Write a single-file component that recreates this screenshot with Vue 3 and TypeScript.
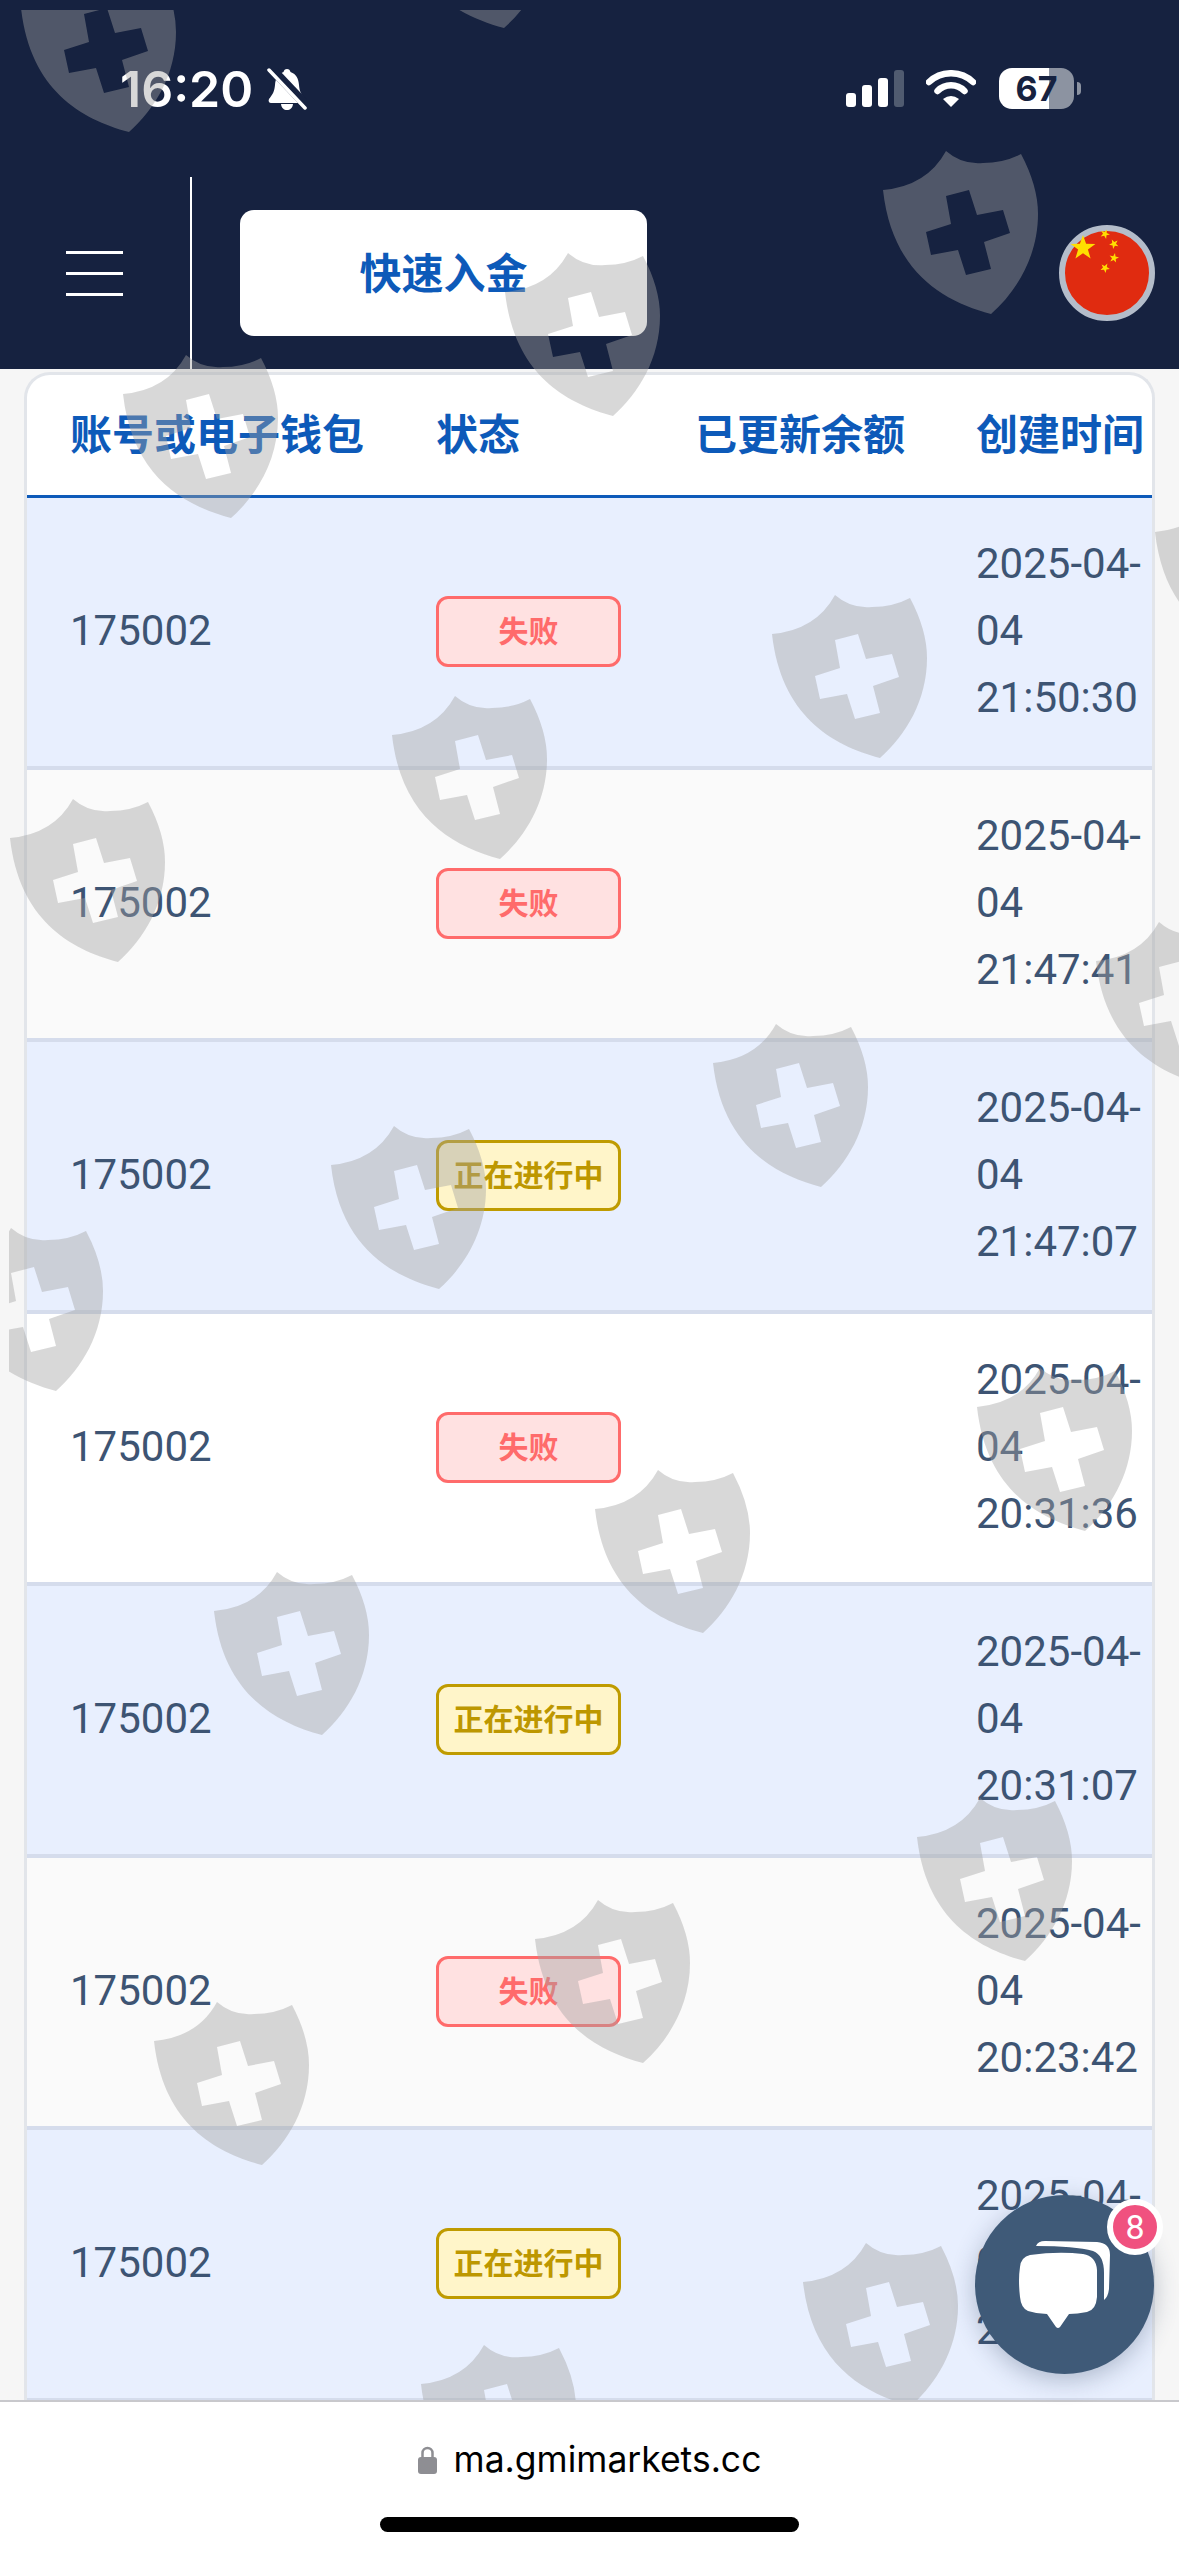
<script setup lang="ts">
type Status = "fail" | "pending";

interface Deposit {
	account: string;
	status: Status;
	created: string;
}

const statusText: Record<Status, string> = {
	fail: "失败",
	pending: "正在进行中",
};

const deposits: Deposit[] = [
	{ account: "175002", status: "fail", created: "2025-04-04 21:50:30" },
	{ account: "175002", status: "fail", created: "2025-04-04 21:47:41" },
	{ account: "175002", status: "pending", created: "2025-04-04 21:47:07" },
	{ account: "175002", status: "fail", created: "2025-04-04 20:31:36" },
	{ account: "175002", status: "pending", created: "2025-04-04 20:31:07" },
	{ account: "175002", status: "fail", created: "2025-04-04 20:23:42" },
	{ account: "175002", status: "pending", created: "2025-04-04 20:23:07" },
];

// top-left corner of each watermark shield on the page
const shields: [number, number][] = [
	[395, -135], [20, -31],
	[882, 151], [504, 253], [122, 355],
	[1154, 493], [771, 595], [391, 696], [9, 799],
	[1095, 922], [712, 1024], [330, 1126], [-53, 1228],
	[976, 1368], [594, 1470], [213, 1572],
	[916, 1798], [534, 1900], [153, 2002],
	[802, 2243], [420, 2345],
];

function star(cx: number, cy: number, r: number, turn = 0): string {
	const pts: string[] = [];
	for (let i = 0; i < 10; i++) {
		const rad = i % 2 === 0 ? r : r * 0.4;
		const a = -Math.PI / 2 + turn + (i * Math.PI) / 5;
		pts.push(`${(cx + rad * Math.cos(a)).toFixed(1)},${(cy + rad * Math.sin(a)).toFixed(1)}`);
	}
	return pts.join(" ");
}

const smallStars = [
	star(46, 9, 5, 0.4),
	star(55, 19, 5, 0.8),
	star(55, 33, 5, 0.2),
	star(46, 43, 5, 0.5),
];
</script>

<template>
	<div class="screen">
		<header class="top">
			<div class="status-bar">
				<div class="status-left">
					<span class="time">16:20</span>
					<svg class="bell" width="40" height="42" viewBox="0 0 40 42">
						<path
							fill="#fff"
							d="M20 1c2 0 3 1 3.500 3 6 2 8 7 8.500 13 .4 6 2 9 6 14 1 2 0 4-2 4H4c-2 0-3-2-2-4 4-5 5.500-8 6-14 .5-6 2.500-11 8.500-13C17 2 18 1 20 1zM14 36h12c-.5 4-3 6-6 6s-5.500-2-6-6z"
						/>
						<path d="M3 -1L41 39" stroke="#162240" stroke-width="9" />
						<path d="M2 2L38 40" stroke="#fff" stroke-width="3.500" stroke-linecap="round" />
					</svg>
				</div>
				<div class="status-right">
					<div class="signal">
						<i class="bar b1"></i>
						<i class="bar b2"></i>
						<i class="bar b3"></i>
						<i class="bar b4"></i>
					</div>
					<svg class="wifi" width="50" height="37" viewBox="0 0 50 37">
						<path d="M3 12A32 32 0 0 1 47 12" fill="none" stroke="#fff" stroke-width="6.500" stroke-linecap="round" />
						<path d="M11.500 21A19 19 0 0 1 38.500 21" fill="none" stroke="#fff" stroke-width="6.500" stroke-linecap="round" />
						<path d="M17 29Q25 23 33 29L25 37Z" fill="#fff" />
					</svg>
					<div class="battery">
						<div class="battery-body">67</div>
						<i class="battery-nub"></i>
					</div>
				</div>
			</div>
			<nav class="nav">
				<button class="menu" type="button" aria-label="menu">
					<i></i>
					<i></i>
					<i></i>
				</button>
				<span class="divider"></span>
				<button class="deposit" type="button">快速入金</button>
				<svg class="flag" width="96" height="96" viewBox="0 0 96 96">
					<circle cx="48" cy="48" r="45" fill="#e02b10" stroke="#b4bdca" stroke-width="6" />
					<polygon :points="star(24, 23, 13)" fill="#ffde00" />
					<polygon v-for="pts in smallStars" :key="pts" :points="pts" fill="#ffde00" />
				</svg>
			</nav>
		</header>

		<main class="content">
			<div class="table">
				<div class="row head">
					<div class="cell">账号或电子钱包</div>
					<div class="cell">状态</div>
					<div class="cell">已更新余额</div>
					<div class="cell">创建时间</div>
				</div>
				<div class="rows">
					<div v-for="(d, i) in deposits" :key="i" class="row item">
						<div class="cell">{{ d.account }}</div>
						<div class="cell">
							<span class="tag" :class="d.status">{{ statusText[d.status] }}</span>
						</div>
						<div class="cell"></div>
						<div class="cell">{{ d.created }}</div>
					</div>
				</div>
			</div>
		</main>

		<footer class="browser-bar">
			<div class="url">
				<svg width="19" height="28" viewBox="0 0 19 28">
					<path d="M4.500 13V7a5 5 0 0 1 10 0v6" fill="none" stroke="#8e8e93" stroke-width="2.500" />
					<rect x="0" y="11" width="19" height="17" rx="3" fill="#8e8e93" />
				</svg>
				<span>ma.gmimarkets.cc</span>
			</div>
			<div class="home-indicator"></div>
		</footer>

		<svg class="watermark" width="1170" height="2390" viewBox="9 10 1170 2390">
			<defs>
				<path
					id="shield"
					fill-rule="evenodd"
					d="M64 0Q80 14 101 12Q122 12 139 3Q156 35 156 63C156 105 135 140 109 163C60 150 10 120 1 39Q45 35 64 0ZM64 45L87 39L95 64L121 59L128 82L102 91L109 118L84 124L76 99L49 104L44 81L69 73Z"
				/>
			</defs>
			<use
				v-for="s in shields"
				:key="s.join()"
				href="#shield"
				:x="s[0]"
				:y="s[1]"
				fill="rgb(163, 163, 163)"
				fill-opacity="0.42"
			/>
		</svg>

		<div class="chat">
			<svg width="179" height="179" viewBox="0 0 179 179">
				<path
					fill="#fff"
					d="M61 51Q63 46 70 46L122 47Q135 48 135 60L134 94Q133 102 129 105L129 78Q129 60 118 56Q100 51 61 51Z"
				/>
				<path
					fill="#fff"
					d="M55 60Q83 56 108 59Q121 61 122 75L122 102Q121 115 112 117Q102 119 94 119L85 132Q83 134 81 132L72 119Q62 119 53 116Q46 113 45 102Q43 85 45 72Q46 62 55 60Z"
				/>
			</svg>
			<span class="chat-count">8</span>
		</div>
	</div>
</template>

<style scoped>
.screen {
	position: relative;
	display: flex;
	flex-direction: column;
	width: 1179px;
	height: 2556px;
	overflow: hidden;
	background: #f6f6f6;
	font-family: Roboto, "Noto Sans CJK SC", sans-serif;
}

.top {
	flex: none;
	height: 369px;
	background: #162240;
	color: #fff;
}

.status-bar {
	display: flex;
	align-items: center;
	justify-content: space-between;
	height: 177px;
	padding: 0 98px 0 120px;
}

.status-left {
	display: flex;
	align-items: center;
	gap: 14px;
}

.time {
	font-family: Inter, sans-serif;
	font-size: 50px;
	font-weight: 600;
	line-height: 1;
}

.status-right {
	display: flex;
	align-items: center;
}

.signal {
	display: flex;
	align-items: flex-end;
	gap: 6px;
	height: 37px;
	margin-right: 22px;
}

.bar {
	display: block;
	width: 10px;
	border-radius: 3px;
	background: #fff;
}

.b1 {
	height: 14px;
}

.b2 {
	height: 22px;
}

.b3 {
	height: 29px;
}

.b4 {
	height: 37px;
	background: #505b70;
}

.wifi {
	margin-right: 23px;
}

.battery {
	display: flex;
	align-items: center;
	gap: 3px;
}

.battery-body {
	width: 75px;
	height: 41px;
	border-radius: 13px;
	background: linear-gradient(90deg, #fff 50px, #8c93a1 50px);
	color: #162240;
	font-family: Inter, sans-serif;
	font-size: 34px;
	font-weight: 700;
	line-height: 41px;
	text-align: center;
}

.battery-nub {
	display: block;
	width: 4px;
	height: 13px;
	border-radius: 0 4px 4px 0;
	background: #8c93a1;
}

.nav {
	display: flex;
	align-items: center;
	height: 192px;
	padding: 0 24px 0 66px;
}

.menu {
	display: flex;
	flex-direction: column;
	gap: 18px;
	width: 57px;
	padding: 0;
	border: 0;
	background: none;
}

.menu i {
	display: block;
	height: 3px;
	background: #fff;
}

.divider {
	align-self: stretch;
	width: 2px;
	margin: 0 48px 0 67px;
	background: #fff;
}

.deposit {
	width: 407px;
	height: 126px;
	padding: 0 0 5px;
	border: 0;
	border-radius: 14px;
	background: #fff;
	color: #0d5ab9;
	font-family: inherit;
	font-size: 42px;
	font-weight: 700;
}

.flag {
	margin-left: auto;
}

.content {
	flex: 1;
	min-height: 0;
	padding: 3px 24px 0;
	overflow: hidden;
}

.table {
	border: 3px solid #e2e5ea;
	border-bottom: 0;
	border-radius: 26px 26px 0 0;
	background: #fff;
}

.row {
	display: grid;
	box-sizing: border-box;
	grid-template-columns: 366px 259px 281px 219px;
	align-items: center;
}

.cell {
	padding-left: 43px;
}

.head {
	height: 123px;
	padding-bottom: 8px;
	border-bottom: 3px solid #0d5ab9;
	color: #0d5ab9;
	font-size: 42px;
	font-weight: 700;
	white-space: nowrap;
}

.item {
	height: 272px;
	padding-bottom: 3px;
	border-bottom: 4px solid #d5dcec;
	color: #3d5473;
	font-size: 42px;
	line-height: 67px;
}

.item:nth-child(odd) {
	background: #e8effe;
}

.item:nth-child(4n + 2) {
	background: #fafafa;
}

.item:nth-child(4n) {
	background: #fff;
}

.tag {
	display: flex;
	align-items: center;
	justify-content: center;
	box-sizing: border-box;
	width: 185px;
	height: 71px;
	margin-top: 2px;
	border: 3px solid;
	border-radius: 12px;
	font-size: 30px;
	font-weight: 700;
	line-height: 1;
}

.fail {
	border-color: #ff6b6b;
	background: #ffe1e1;
	color: #ff6b6b;
}

.pending {
	border-color: #bf9b00;
	background: #fff5c9;
	color: #bd9700;
}

.browser-bar {
	position: relative;
	flex: none;
	box-sizing: border-box;
	height: 156px;
	border-top: 2px solid #c8c8cc;
	background: #fff;
}

.url {
	display: flex;
	align-items: center;
	justify-content: center;
	gap: 17px;
	padding-top: 38px;
	color: #000;
	font-family: Inter, sans-serif;
	font-size: 35.5px;
	line-height: 40px;
}

.home-indicator {
	position: absolute;
	left: 380px;
	bottom: 24px;
	width: 419px;
	height: 15px;
	border-radius: 8px;
	background: #000;
}

.watermark {
	position: absolute;
	left: 9px;
	top: 10px;
	pointer-events: none;
}

.chat {
	position: absolute;
	left: 975px;
	top: 2195px;
	width: 179px;
	height: 179px;
	border-radius: 50%;
	background: #3f5a78;
	box-shadow: 0 6px 24px rgba(40, 60, 90, 0.3);
}

.chat svg {
	display: block;
}

.chat-count {
	position: absolute;
	left: 132px;
	top: 4px;
	box-sizing: border-box;
	width: 56px;
	height: 56px;
	border: 6px solid #fff;
	border-radius: 50%;
	background: #f0517f;
	color: #fff;
	font-size: 34px;
	line-height: 44px;
	text-align: center;
}
</style>
